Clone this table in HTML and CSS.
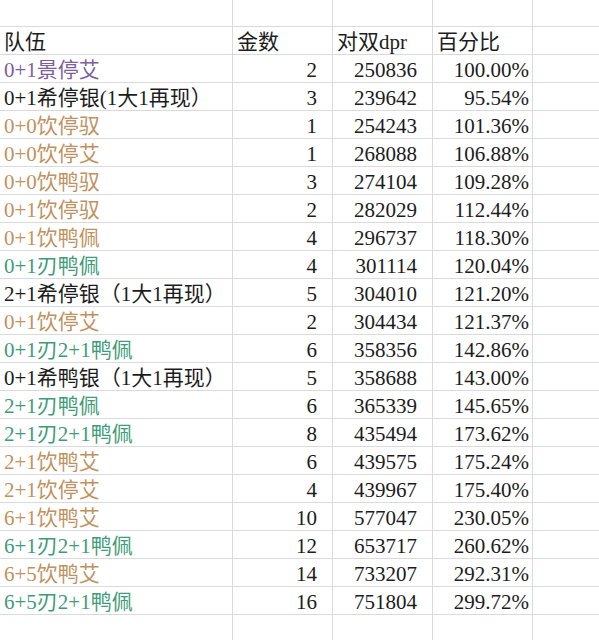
FILE: index.html
```html
<!DOCTYPE html>
<html lang="zh">
<head>
<meta charset="utf-8">
<title>队伍</title>
<link rel="stylesheet" href="styles.css">
</head>
<body>
<div class="sheet">
  <div class="row row-top"><div class="cell"></div><div class="cell"></div><div class="cell"></div><div class="cell"></div><div class="cell last"></div></div>
  <div class="row"><div class="cell">队伍</div><div class="cell">金数</div><div class="cell">对双dpr</div><div class="cell">百分比</div><div class="cell last"></div></div>
  <div class="row"><div class="cell purple">0+1景停艾</div><div class="cell num">2</div><div class="cell num">250836</div><div class="cell num pct">100.00%</div><div class="cell last"></div></div>
  <div class="row"><div class="cell">0+1希停银(1大1再现）</div><div class="cell num">3</div><div class="cell num">239642</div><div class="cell num pct">95.54%</div><div class="cell last"></div></div>
  <div class="row"><div class="cell tan">0+0饮停驭</div><div class="cell num">1</div><div class="cell num">254243</div><div class="cell num pct">101.36%</div><div class="cell last"></div></div>
  <div class="row"><div class="cell tan">0+0饮停艾</div><div class="cell num">1</div><div class="cell num">268088</div><div class="cell num pct">106.88%</div><div class="cell last"></div></div>
  <div class="row"><div class="cell tan">0+0饮鸭驭</div><div class="cell num">3</div><div class="cell num">274104</div><div class="cell num pct">109.28%</div><div class="cell last"></div></div>
  <div class="row"><div class="cell tan">0+1饮停驭</div><div class="cell num">2</div><div class="cell num">282029</div><div class="cell num pct">112.44%</div><div class="cell last"></div></div>
  <div class="row"><div class="cell tan">0+1饮鸭佩</div><div class="cell num">4</div><div class="cell num">296737</div><div class="cell num pct">118.30%</div><div class="cell last"></div></div>
  <div class="row"><div class="cell green">0+1刃鸭佩</div><div class="cell num">4</div><div class="cell num">301114</div><div class="cell num pct">120.04%</div><div class="cell last"></div></div>
  <div class="row"><div class="cell">2+1希停银（1大1再现）</div><div class="cell num">5</div><div class="cell num">304010</div><div class="cell num pct">121.20%</div><div class="cell last"></div></div>
  <div class="row"><div class="cell tan">0+1饮停艾</div><div class="cell num">2</div><div class="cell num">304434</div><div class="cell num pct">121.37%</div><div class="cell last"></div></div>
  <div class="row"><div class="cell green">0+1刃2+1鸭佩</div><div class="cell num">6</div><div class="cell num">358356</div><div class="cell num pct">142.86%</div><div class="cell last"></div></div>
  <div class="row"><div class="cell">0+1希鸭银（1大1再现）</div><div class="cell num">5</div><div class="cell num">358688</div><div class="cell num pct">143.00%</div><div class="cell last"></div></div>
  <div class="row"><div class="cell green">2+1刃鸭佩</div><div class="cell num">6</div><div class="cell num">365339</div><div class="cell num pct">145.65%</div><div class="cell last"></div></div>
  <div class="row"><div class="cell green">2+1刃2+1鸭佩</div><div class="cell num">8</div><div class="cell num">435494</div><div class="cell num pct">173.62%</div><div class="cell last"></div></div>
  <div class="row"><div class="cell tan">2+1饮鸭艾</div><div class="cell num">6</div><div class="cell num">439575</div><div class="cell num pct">175.24%</div><div class="cell last"></div></div>
  <div class="row"><div class="cell tan">2+1饮停艾</div><div class="cell num">4</div><div class="cell num">439967</div><div class="cell num pct">175.40%</div><div class="cell last"></div></div>
  <div class="row"><div class="cell tan">6+1饮鸭艾</div><div class="cell num">10</div><div class="cell num">577047</div><div class="cell num pct">230.05%</div><div class="cell last"></div></div>
  <div class="row"><div class="cell green">6+1刃2+1鸭佩</div><div class="cell num">12</div><div class="cell num">653717</div><div class="cell num pct">260.62%</div><div class="cell last"></div></div>
  <div class="row"><div class="cell tan">6+5饮鸭艾</div><div class="cell num">14</div><div class="cell num">733207</div><div class="cell num pct">292.31%</div><div class="cell last"></div></div>
  <div class="row"><div class="cell green">6+5刃2+1鸭佩</div><div class="cell num">16</div><div class="cell num">751804</div><div class="cell num pct">299.72%</div><div class="cell last"></div></div>
  <div class="row row-end"><div class="cell"></div><div class="cell"></div><div class="cell"></div><div class="cell"></div><div class="cell last"></div></div>
</div>
</body>
</html>
```

FILE: styles.css
```css
html, body {
  margin: 0;
  padding: 0;
  background: #ffffff;
}

.sheet {
  width: 599px;
  height: 640px;
  overflow: hidden;
  font-family: "Liberation Serif", "Noto Sans CJK SC", serif;
  font-size: 21px;
  color: #1c1c1c;
}

.row {
  display: grid;
  grid-template-columns: 233px 100px 100px 100px 1fr;
  height: 28px;
  box-sizing: border-box;
  border-bottom: 1px solid #dadada;
}

.row-top {
  height: 27px;
}

.row-end {
  height: 40px;
  border-bottom: none;
}

.cell {
  display: flex;
  align-items: flex-end;
  padding: 0 4px 1px 4px;
  line-height: 21px;
  white-space: nowrap;
  overflow: hidden;
  border-right: 1px solid #dadada;
}

.cell.last {
  border-right: none;
}

.num {
  justify-content: flex-end;
  padding-right: 15px;
}

.num.pct {
  padding-right: 3px;
}

.purple {
  color: #7d5e9e;
}

.tan {
  color: #c0925e;
}

.green {
  color: #3f9c78;
}
```
